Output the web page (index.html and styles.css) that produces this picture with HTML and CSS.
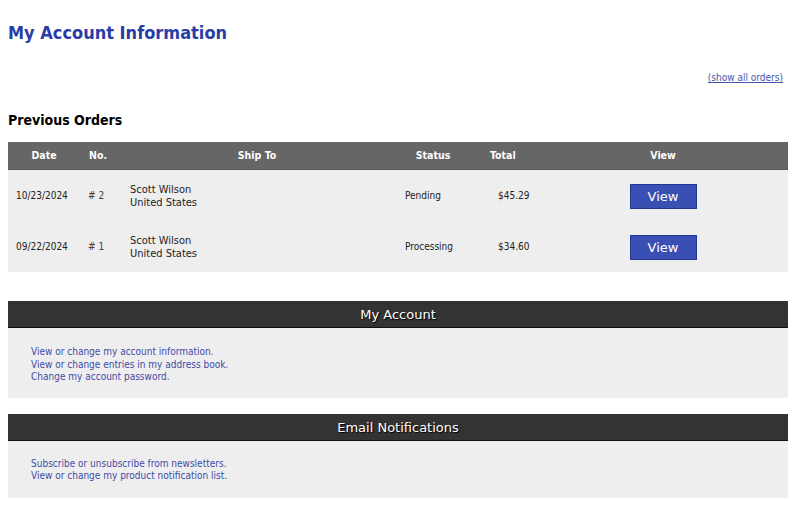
FILE: index.html
```html
<!DOCTYPE html>
<html>
<head>
<meta charset="utf-8">
<link rel="stylesheet" href="styles.css">
</head>
<body>
<div class="page">
  <h1 class="title">My Account Information</h1>
  <div class="show-all"><a href="#">(show all orders)</a></div>
  <h2 class="subtitle">Previous Orders</h2>
  <div class="orders">
    <div class="row head">
      <div class="c date">Date</div>
      <div class="c no">No.</div>
      <div class="c ship">Ship To</div>
      <div class="c status">Status</div>
      <div class="c total">Total</div>
      <div class="c view">View</div>
    </div>
    <div class="row">
      <div class="c date">10/23/2024</div>
      <div class="c no"># 2</div>
      <div class="c ship">Scott Wilson<br>United States</div>
      <div class="c status">Pending</div>
      <div class="c total">$45.29</div>
      <div class="c view"><button class="btn">View</button></div>
    </div>
    <div class="row">
      <div class="c date">09/22/2024</div>
      <div class="c no"># 1</div>
      <div class="c ship">Scott Wilson<br>United States</div>
      <div class="c status">Processing</div>
      <div class="c total">$34.60</div>
      <div class="c view"><button class="btn">View</button></div>
    </div>
  </div>

  <div class="box box-account">
    <div class="box-head">My Account</div>
    <div class="box-body">
      <a href="#">View or change my account information.</a>
      <a href="#">View or change entries in my address book.</a>
      <a href="#">Change my account password.</a>
    </div>
  </div>

  <div class="box box-email">
    <div class="box-head">Email Notifications</div>
    <div class="box-body">
      <a href="#">Subscribe or unsubscribe from newsletters.</a>
      <a href="#">View or change my product notification list.</a>
    </div>
  </div>
</div>
</body>
</html>
```
FILE: styles.css
```css
html, body {
  margin: 0;
  padding: 0;
  background: #fff;
}
body {
  font-family: "DejaVu Sans Condensed", "DejaVu Sans", Verdana, sans-serif;
  color: #000;
}
.page {
  padding: 0 12px 0 8px;
  display: flex;
  flex-direction: column;
}
.title {
  margin: 21px 0 0;
  font-size: 18px;
  font-weight: bold;
  color: #2a3da6;
  line-height: 24px;
}
.show-all {
  text-align: right;
  font-size: 10px;
  margin: 27px 5px 0 0;
  line-height: 12px;
}
.show-all a {
  color: #4a57a8;
}
.subtitle {
  margin: 28px 0 0;
  font-size: 14px;
  font-weight: bold;
  line-height: 16px;
}
.orders {
  margin-top: 14px;
  background: #eeeeee;
  font-size: 10px;
  color: #222;
}
.row {
  display: grid;
  grid-template-columns: 72px 42px 270px 82px 64px 250px;
  align-items: center;
  height: 51px;
}
.row.head {
  height: 28px;
  background: #666666;
  color: #fff;
  font-weight: bold;
  font-size: 10.5px;
  border-bottom: 1px solid #555;
  box-sizing: border-box;
}
.c {
  line-height: 13px;
}
.date { padding-left: 8px; }
.no { padding-left: 8px; color: #444; }
.ship { padding-left: 8px; font-size: 11px; }
.status { padding-left: 13px; }
.total { padding-left: 24px; }
.view { text-align: center; }
.head .date { text-align: center; padding-left: 0; }
.head .no { padding-left: 9px; color: #fff; }
.head .ship { text-align: center; padding-left: 0; font-size: 10.5px; }
.head .status { text-align: center; padding-left: 0; }
.head .total { padding-left: 16px; }
.btn {
  width: 67px;
  height: 25px;
  background: #3a4fb4;
  border: 1px solid #253795;
  color: #fff;
  font-family: "DejaVu Sans", Verdana, sans-serif;
  font-size: 13px;
  padding: 0;
  margin-top: 1px;
}
.box {
  display: flex;
  flex-direction: column;
  background: #eeeeee;
}
.box-account { margin-top: 29px; }
.box-email { margin-top: 16px; }
.box-head {
  height: 27px;
  box-sizing: border-box;
  background: #333333;
  color: #fff;
  font-family: "DejaVu Sans", Verdana, sans-serif;
  font-size: 13px;
  text-align: center;
  line-height: 27px;
  text-shadow: 1px 1px 1px #000;
  border-bottom: 1px solid #111;
}
.box-body {
  display: flex;
  flex-direction: column;
  padding: 18px 23px 14px;
  font-size: 10px;
  line-height: 12.5px;
}
.box-email .box-body { padding: 17px 23px 15px; }
.box-body a {
  color: #3e4ba8;
  text-decoration: none;
}
```
